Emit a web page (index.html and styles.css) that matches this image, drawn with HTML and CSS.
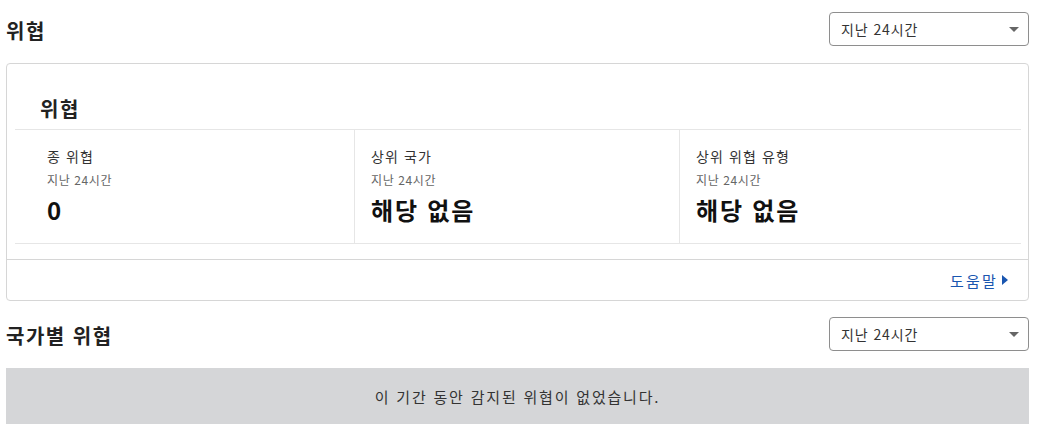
FILE: index.html
```html
<!DOCTYPE html>
<html lang="ko">
<head>
<meta charset="utf-8">
<link rel="stylesheet" href="styles.css">
</head>
<body>
<div class="page">
  <div class="section-head">
    <h2 class="section-title">위협</h2>
    <div class="select"><span>지난 24시간</span><span class="caret"></span></div>
  </div>
  <div class="card">
    <h3 class="card-title">위협</h3>
    <div class="stats">
      <div class="stat first">
        <div class="stat-label">종 위협</div>
        <div class="stat-sub">지난 24시간</div>
        <div class="stat-value">0</div>
      </div>
      <div class="stat">
        <div class="stat-label">상위 국가</div>
        <div class="stat-sub">지난 24시간</div>
        <div class="stat-value">해당 없음</div>
      </div>
      <div class="stat last">
        <div class="stat-label">상위 위협 유형</div>
        <div class="stat-sub">지난 24시간</div>
        <div class="stat-value">해당 없음</div>
      </div>
    </div>
    <div class="card-footer">
      <a class="help">도움말<span class="tri"></span></a>
    </div>
  </div>
  <div class="section-head second">
    <h2 class="section-title">국가별 위협</h2>
    <div class="select"><span>지난 24시간</span><span class="caret"></span></div>
  </div>
  <div class="empty">이 기간 동안 감지된 위협이 없었습니다.</div>
</div>
</body>
</html>
```
FILE: styles.css
```css
html, body {
  margin: 0;
  padding: 0;
  background: #ffffff;
}
body {
  font-family: "Noto Sans CJK KR", "Liberation Sans", sans-serif;
  color: #333;
}
.page {
  padding: 12px 11px 0 6px;
}
.section-head {
  display: flex;
  align-items: center;
  justify-content: space-between;
}
.section-head.second {
  margin-top: 16px;
}
.section-title {
  margin: 0;
  padding-top: 3px;
  font-size: 20px;
  letter-spacing: 1.5px;
  font-weight: 700;
  color: #222;
  line-height: 24px;
}
.select {
  box-sizing: border-box;
  width: 200px;
  height: 34px;
  border: 1px solid #8e8e8e;
  border-radius: 4px;
  display: flex;
  align-items: center;
  justify-content: space-between;
  padding: 0 8px 0 11px;
  font-size: 14px;
  letter-spacing: 0.9px;
  color: #333;
}
.caret {
  width: 0;
  height: 0;
  border-left: 5px solid transparent;
  border-right: 5px solid transparent;
  border-top: 5px solid #666;
  margin-right: 1px;
}
.card {
  margin-top: 17px;
  border: 1px solid #d6d6d6;
  border-radius: 4px;
}
.card-title {
  margin: 0;
  height: 65px;
  box-sizing: border-box;
  padding: 33px 0 0 33px;
  font-size: 20px;
  letter-spacing: 1.5px;
  font-weight: 700;
  color: #222;
  line-height: 24px;
}
.stats {
  margin: 0 7px 0 8px;
  display: grid;
  grid-template-columns: 340px 325px 1fr;
  border-top: 1px solid #e6e6e6;
  border-bottom: 1px solid #e6e6e6;
  height: 115px;
  box-sizing: border-box;
}
.stat {
  border-right: 1px solid #e6e6e6;
  padding: 16px 16px 0 16px;
}
.stat.first {
  padding-left: 32px;
}
.stat.last {
  border-right: none;
}
.stat-label {
  font-size: 14px;
  letter-spacing: 1.1px;
  line-height: 20px;
  color: #333;
}
.stat-sub {
  margin-top: 6px;
  font-size: 12px;
  letter-spacing: 0.6px;
  line-height: 16px;
  color: #666;
}
.stat-value {
  margin-top: 6px;
  font-size: 24px;
  letter-spacing: 1.8px;
  font-weight: 700;
  line-height: 32px;
  color: #111;
}
.card-footer {
  margin-top: 15px;
  border-top: 1px solid #d6d6d6;
  height: 40px;
  display: flex;
  align-items: center;
  justify-content: flex-end;
  padding-right: 20px;
}
.help {
  display: flex;
  align-items: center;
  color: #1a56b0;
  font-size: 15px;
  letter-spacing: 2.2px;
  text-decoration: none;
}
.tri {
  width: 0;
  height: 0;
  border-top: 5px solid transparent;
  border-bottom: 5px solid transparent;
  border-left: 6px solid #1a56b0;
  margin-left: 4px;
}
.empty {
  margin-top: 17px;
  background: #d5d6d8;
  height: 56px;
  display: flex;
  align-items: center;
  justify-content: center;
  font-size: 15px;
  letter-spacing: 1.8px;
  color: #333;
}
```
